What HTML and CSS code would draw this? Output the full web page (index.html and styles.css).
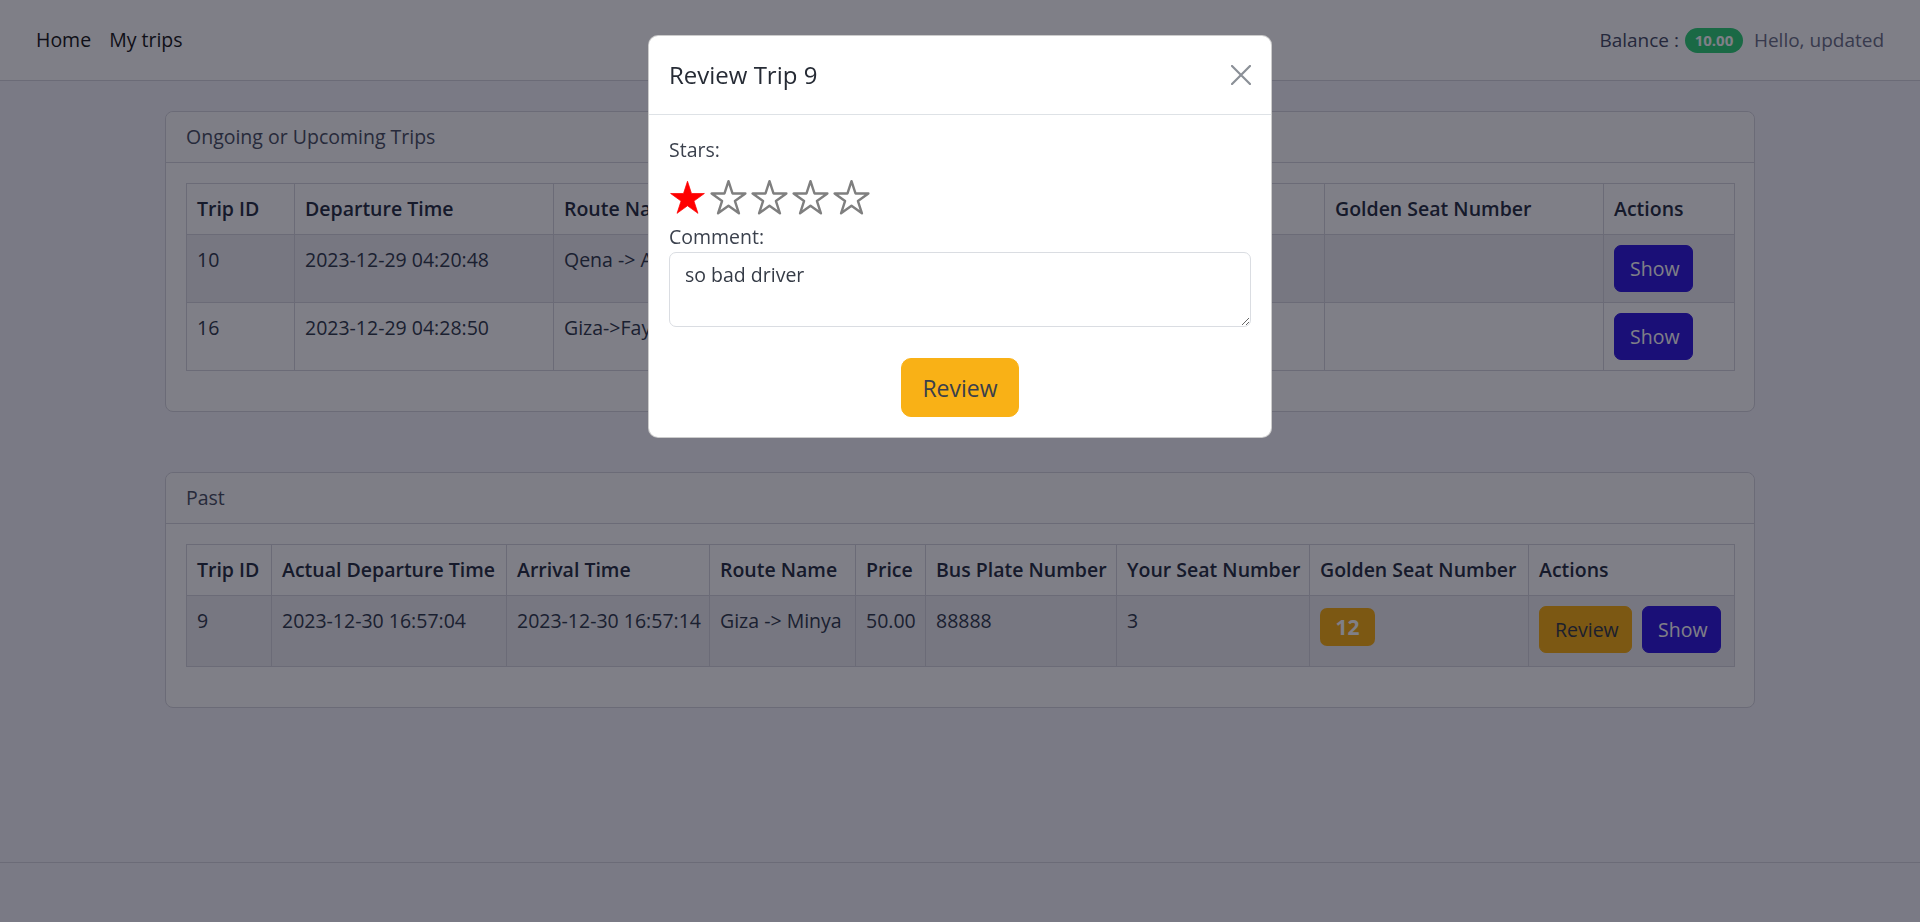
FILE: index.html
```html
<!DOCTYPE html>
<html lang="en">
<head>
<meta charset="utf-8">
<title>My trips</title>
<link rel="stylesheet" href="styles.css">
</head>
<body>
<nav class="navbar">
  <div class="nav-left">
    <a class="nav-link" href="#">Home</a>
    <a class="nav-link" href="#">My trips</a>
  </div>
  <div class="nav-right">
    <span class="balance-label">Balance :</span>
    <span class="balance-badge">10.00</span>
    <span class="hello">Hello, updated</span>
  </div>
</nav>

<main class="container">
  <section class="card card-upcoming">
    <div class="card-header">Ongoing or Upcoming Trips</div>
    <div class="card-body">
      <table class="trips">
        <colgroup>
          <col class="u1"><col class="u2"><col class="u3"><col class="u4"><col class="u5"><col class="u6"><col class="u7"><col class="u8">
        </colgroup>
        <thead>
          <tr><th>Trip ID</th><th>Departure Time</th><th>Route Name</th><th>Price</th><th>Bus Plate Number</th><th>Your Seat Number</th><th>Golden Seat Number</th><th>Actions</th></tr>
        </thead>
        <tbody>
          <tr><td>10</td><td>2023-12-29 04:20:48</td><td>Qena -&gt; Aswan</td><td>40.00</td><td>12345</td><td>5</td><td></td><td><button class="btn btn-show">Show</button></td></tr>
          <tr><td>16</td><td>2023-12-29 04:28:50</td><td>Giza-&gt;Fayoum</td><td>30.00</td><td>55555</td><td>7</td><td></td><td><button class="btn btn-show">Show</button></td></tr>
        </tbody>
      </table>
    </div>
  </section>

  <section class="card card-past">
    <div class="card-header">Past</div>
    <div class="card-body">
      <table class="trips">
        <colgroup>
          <col class="p1"><col class="p2"><col class="p3"><col class="p4"><col class="p5"><col class="p6"><col class="p7"><col class="p8"><col class="p9">
        </colgroup>
        <thead>
          <tr><th>Trip ID</th><th>Actual Departure Time</th><th>Arrival Time</th><th>Route Name</th><th>Price</th><th>Bus Plate Number</th><th>Your Seat Number</th><th>Golden Seat Number</th><th>Actions</th></tr>
        </thead>
        <tbody>
          <tr class="row-past"><td>9</td><td>2023-12-30 16:57:04</td><td>2023-12-30 16:57:14</td><td>Giza -&gt; Minya</td><td>50.00</td><td>88888</td><td>3</td><td><span class="golden">12</span></td><td><div class="actions"><button class="btn btn-review">Review</button><button class="btn btn-show">Show</button></div></td></tr>
        </tbody>
      </table>
    </div>
  </section>
</main>

<footer class="footer"></footer>

<div class="backdrop"></div>

<div class="modal">
  <div class="modal-header">
    <h5 class="modal-title">Review Trip 9</h5>
    <button class="btn-close" aria-label="Close">
      <svg width="20" height="20" viewBox="0 0 20 20"><path d="M1 1 L19 19 M19 1 L1 19" stroke="#8b9097" stroke-width="2.2" stroke-linecap="square"/></svg>
    </button>
  </div>
  <div class="modal-body">
    <label class="field-label">Stars:</label>
    <div class="stars">
      <svg class="star" viewBox="0 0 100 92"><polygon class="star-on" points="50,2 60.78,35.16 95.65,35.17 67.44,55.67 78.21,88.83 50,68.34 21.79,88.83 32.56,55.67 4.35,35.17 39.22,35.16"/></svg>
      <svg class="star" viewBox="0 0 100 92"><polygon class="star-off" points="50,2 60.78,35.16 95.65,35.17 67.44,55.67 78.21,88.83 50,68.34 21.79,88.83 32.56,55.67 4.35,35.17 39.22,35.16"/></svg>
      <svg class="star" viewBox="0 0 100 92"><polygon class="star-off" points="50,2 60.78,35.16 95.65,35.17 67.44,55.67 78.21,88.83 50,68.34 21.79,88.83 32.56,55.67 4.35,35.17 39.22,35.16"/></svg>
      <svg class="star" viewBox="0 0 100 92"><polygon class="star-off" points="50,2 60.78,35.16 95.65,35.17 67.44,55.67 78.21,88.83 50,68.34 21.79,88.83 32.56,55.67 4.35,35.17 39.22,35.16"/></svg>
      <svg class="star" viewBox="0 0 100 92"><polygon class="star-off" points="50,2 60.78,35.16 95.65,35.17 67.44,55.67 78.21,88.83 50,68.34 21.79,88.83 32.56,55.67 4.35,35.17 39.22,35.16"/></svg>
    </div>
    <label class="field-label">Comment:</label>
    <textarea class="comment">so bad driver</textarea>
    <div class="submit-row">
      <button class="btn btn-submit">Review</button>
    </div>
  </div>
</div>
</body>
</html>
```

FILE: styles.css
```css
* {
  box-sizing: border-box;
}

html, body {
  margin: 0;
  padding: 0;
}

body {
  font-family: "Open Sans", "Noto Sans", sans-serif;
  font-size: 19.5px;
  line-height: 30px;
  color: #374151;
  background: #f4f4fa;
  min-height: 100vh;
  display: flex;
  flex-direction: column;
}

/* navbar */
.navbar {
  height: 81px;
  background: #ffffff;
  border-bottom: 1px solid #d6d6de;
  display: flex;
  align-items: center;
  justify-content: space-between;
  padding: 0 36px;
}

.nav-left {
  display: flex;
  gap: 18px;
}

.nav-link {
  color: #1e1e22;
  text-decoration: none;
}

.nav-right {
  display: flex;
  align-items: center;
  font-size: 19px;
}

.balance-label {
  color: #4a5068;
}

.balance-badge {
  margin-left: 6px;
  width: 58px;
  height: 25px;
  border-radius: 13px;
  background: #34d27a;
  color: #ffffff;
  font-weight: 700;
  font-size: 15px;
  line-height: 25px;
  text-align: center;
}

.hello {
  margin-left: 11px;
  color: #70748a;
}

/* layout */
.container {
  width: 1590px;
  margin: 30px auto 0;
  flex: 1;
}

.card {
  background: #ffffff;
  border: 1px solid #d6d6de;
  border-radius: 8px;
}

.card-upcoming {
  margin-bottom: 60px;
}

.card-header {
  padding: 10px 20px;
  border-bottom: 1px solid #d6d6de;
  background: #fcfcfd;
  color: #4f5566;
  border-radius: 8px 8px 0 0;
}

.card-body {
  padding: 20px;
}

/* tables */
.trips {
  width: 100%;
  table-layout: fixed;
  border-collapse: collapse;
  margin-bottom: 20px;
}

.trips th,
.trips td {
  border: 1px solid #d6d6de;
  padding: 10px;
  text-align: left;
  vertical-align: top;
  white-space: nowrap;
  overflow: hidden;
}

.trips th {
  font-weight: 600;
  color: #2d3446;
}

.trips tbody tr:nth-child(odd) td {
  background: #eeeef2;
}

.trips .row-past td {
  padding-bottom: 13px;
}

.u1 { width: 108px; }
.u2 { width: 259px; }
.u3 { width: 207px; }
.u4 { width: 90px; }
.u5 { width: 210px; }
.u6 { width: 264px; }
.u7 { width: 279px; }
.u8 { width: 131px; }

.p1 { width: 85px; }
.p2 { width: 235px; }
.p3 { width: 203px; }
.p4 { width: 146px; }
.p5 { width: 70px; }
.p6 { width: 191px; }
.p7 { width: 193px; }
.p8 { width: 219px; }
.p9 { width: 206px; }

.actions {
  display: flex;
  gap: 10px;
}

.btn {
  font-family: inherit;
  font-size: 19.5px;
  line-height: 30px;
  height: 47px;
  padding: 0 15px;
  border-radius: 7px;
  border: 1px solid transparent;
  cursor: pointer;
}

.btn-show {
  background: #341ede;
  border-color: #341ede;
  color: #ffffff;
  width: 79px;
}

.btn-review {
  background: #f9b116;
  border-color: #f9b116;
  color: #3a3f4c;
  width: 93px;
}

.golden {
  display: inline-flex;
  align-items: center;
  justify-content: center;
  width: 55px;
  height: 38px;
  margin-top: 2px;
  border-radius: 7px;
  background: #f9b116;
  color: #ffffff;
  font-weight: 700;
  font-size: 21px;
}

/* footer */
.footer {
  height: 60px;
  border-top: 1px solid #d6d6de;
}

/* modal */
.backdrop {
  position: fixed;
  inset: 0;
  background: rgba(0, 0, 16, 0.5);
}

.modal {
  position: fixed;
  top: 35px;
  left: 648px;
  width: 624px;
  background: #ffffff;
  border: 1px solid rgba(0, 0, 0, 0.2);
  border-radius: 10px;
  color: #343a46;
}

.modal-header {
  display: flex;
  align-items: center;
  justify-content: space-between;
  padding: 20px;
  height: 79px;
  border-bottom: 1px solid #dee2e6;
}

.modal-title {
  margin: 0;
  font-size: 24px;
  font-weight: 500;
  line-height: 36px;
  color: #262b35;
}

.btn-close {
  width: 20px;
  height: 20px;
  padding: 0;
  border: 0;
  background: transparent;
  display: flex;
}

.modal-body {
  padding: 20px;
}

.field-label {
  display: block;
  color: #3b414d;
}

.stars {
  display: flex;
  gap: 4px;
  margin: 15px 0 7px;
}

.star {
  width: 37px;
  height: 35px;
  overflow: visible;
}

.star-on {
  fill: #ff0000;
  stroke: #ff0000;
  stroke-width: 2;
  stroke-linejoin: round;
}

.star-off {
  fill: #ffffff;
  stroke: #7f7f7f;
  stroke-width: 6.5;
  stroke-linejoin: round;
}

.comment {
  display: block;
  width: 100%;
  height: 75px;
  padding: 7px 15px;
  border: 1px solid #dadde2;
  border-radius: 7px;
  font-family: inherit;
  font-size: 19.5px;
  line-height: 30px;
  color: #353b46;
  resize: vertical;
}

.submit-row {
  display: flex;
  justify-content: center;
  margin-top: 31px;
}

.btn-submit {
  width: 118px;
  height: 59px;
  border-radius: 10px;
  background: #f9b116;
  border-color: #f9b116;
  color: #3a3f4c;
  font-size: 23px;
  line-height: 34px;
  padding: 0;
}
```
